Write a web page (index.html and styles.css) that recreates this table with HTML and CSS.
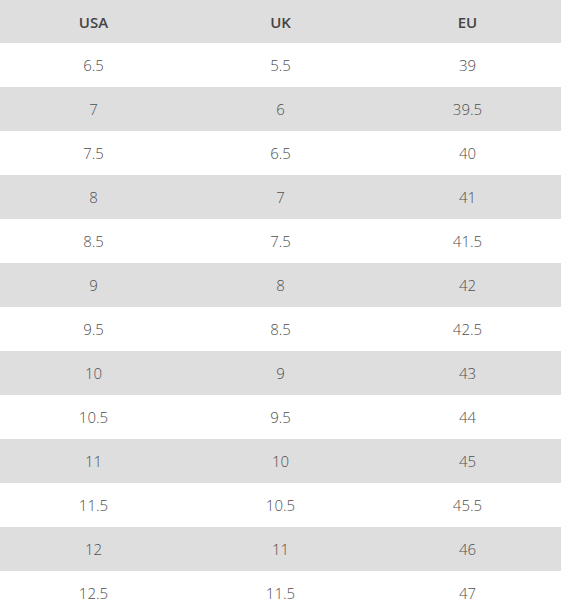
FILE: index.html
```html
<!DOCTYPE html>
<html>
<head>
<meta charset="utf-8">
<link rel="stylesheet" href="styles.css">
</head>
<body>
<table class="size-table">
<thead>
<tr><th>USA</th><th>UK</th><th>EU</th></tr>
</thead>
<tbody>
<tr><td>6.5</td><td>5.5</td><td>39</td></tr>
<tr><td>7</td><td>6</td><td>39.5</td></tr>
<tr><td>7.5</td><td>6.5</td><td>40</td></tr>
<tr><td>8</td><td>7</td><td>41</td></tr>
<tr><td>8.5</td><td>7.5</td><td>41.5</td></tr>
<tr><td>9</td><td>8</td><td>42</td></tr>
<tr><td>9.5</td><td>8.5</td><td>42.5</td></tr>
<tr><td>10</td><td>9</td><td>43</td></tr>
<tr><td>10.5</td><td>9.5</td><td>44</td></tr>
<tr><td>11</td><td>10</td><td>45</td></tr>
<tr><td>11.5</td><td>10.5</td><td>45.5</td></tr>
<tr><td>12</td><td>11</td><td>46</td></tr>
<tr><td>12.5</td><td>11.5</td><td>47</td></tr>
</tbody>
</table>
</body>
</html>
```
FILE: styles.css
```css
html, body {
  margin: 0;
  padding: 0;
  background: #fff;
}
.size-table {
  width: 561px;
  border-collapse: collapse;
  table-layout: fixed;
  font-family: "Open Sans", sans-serif;
  font-size: 15px;
  color: #505050;
}
.size-table th {
  height: 43px;
  padding: 0;
  font-weight: 600;
  color: #444;
  background: #dedede;
  text-align: center;
}
.size-table td {
  height: 44px;
  padding: 0;
  font-weight: 300;
  text-align: center;
}
.size-table tbody tr:nth-child(even) td {
  background: #dedede;
}
```
